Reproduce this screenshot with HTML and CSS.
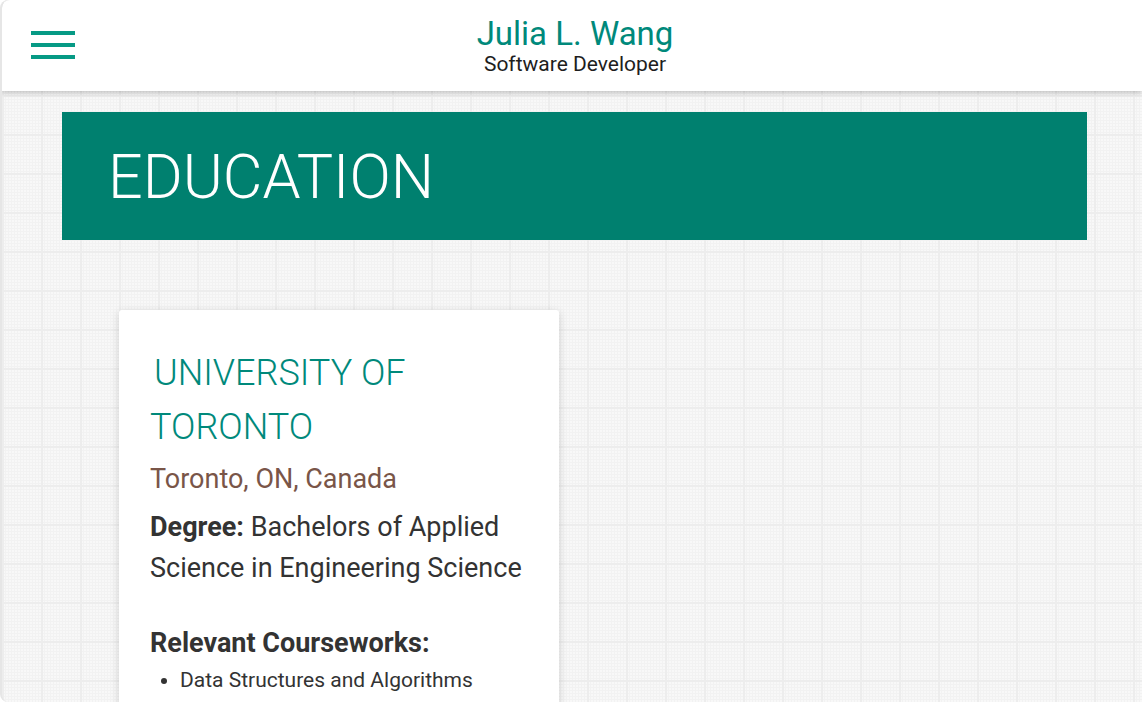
FILE: index.html
```html
<!DOCTYPE html>
<html lang="en">
<head>
<meta charset="utf-8">
<title>Julia L. Wang</title>
<link rel="stylesheet" href="styles.css">
</head>
<body>
<div class="page">
  <header class="topbar">
    <button class="menu" aria-label="Menu">
      <span class="bar"></span><span class="bar"></span><span class="bar"></span>
    </button>
    <div class="brand">
      <div class="name">Julia L. Wang</div>
      <div class="role">Software Developer</div>
    </div>
  </header>
  <main class="content">
    <section class="banner">
      <h1 class="banner-title">EDUCATION</h1>
    </section>
    <article class="card">
      <h2 class="school">UNIVERSITY OF TORONTO</h2>
      <p class="location">Toronto, ON, Canada</p>
      <p class="degree"><strong>Degree:</strong> Bachelors of Applied Science in Engineering Science</p>
      <h3 class="courses-title">Relevant Courseworks:</h3>
      <ul class="courses">
        <li>Data Structures and Algorithms</li>
        <li>Operating Systems</li>
        <li>Computer Networks</li>
      </ul>
    </article>
  </main>
</div>
</body>
</html>
```

FILE: styles.css
```css
* { box-sizing: border-box; }

html, body {
  margin: 0;
  padding: 0;
  height: 100%;
  overflow: hidden;
  background: #ffffff;
}

body {
  font-family: Roboto, "Liberation Sans", Arial, sans-serif;
}

.page {
  height: 702px;
  overflow: hidden;
  border-left: 2px solid #e6e6e6;
  border-radius: 8px 0 0 8px;
  background-color: #f8f8f8;
  background-image:
    linear-gradient(to right, #ededed 0, #ededed 2px, transparent 2px),
    linear-gradient(to bottom, #ededed 0, #ededed 2px, transparent 2px),
    repeating-linear-gradient(to right, #f2f2f2 0, #f2f2f2 1px, transparent 1px, transparent 3px),
    repeating-linear-gradient(to bottom, #f2f2f2 0, #f2f2f2 1px, transparent 1px, transparent 3px);
  background-size: 39px 39px, 39px 39px, auto, auto;
  background-position: 0 17px, 0 17px, 0 0, 0 0;
}

.topbar {
  position: relative;
  z-index: 2;
  height: 91px;
  background: #ffffff;
  border-top-left-radius: 8px;
  box-shadow: 0 2px 5px rgba(0, 0, 0, 0.22);
  display: flex;
  align-items: center;
  justify-content: center;
}

.menu {
  position: absolute;
  left: 29px;
  top: 31px;
  width: 44px;
  height: 28px;
  padding: 0;
  border: 0;
  background: transparent;
  display: flex;
  flex-direction: column;
  justify-content: space-between;
}

.bar {
  display: block;
  width: 44px;
  height: 4px;
  background: #069a85;
}

.brand {
  text-align: center;
  margin-left: 6px;
  margin-top: 1px;
}

.name {
  font-size: 33px;
  line-height: 36px;
  color: #00897b;
}

.role {
  font-size: 21px;
  line-height: 24px;
  color: #1e1e1e;
}

.content {
  padding: 21px 55px 0 60px;
}

.banner {
  height: 128px;
  background: #00806f;
  display: flex;
  align-items: center;
  padding-left: 46px;
}

.banner-title {
  margin: 2px 0 0;
  font-weight: 300;
  font-size: 61px;
  color: #ffffff;
}

.card {
  width: 440px;
  margin: 70px 0 0 57px;
  background: #ffffff;
  border-radius: 3px;
  box-shadow: 0 2px 8px rgba(0, 0, 0, 0.16);
  padding: 36px 30px 20px 31px;
}

.school {
  margin: 0;
  font-weight: 300;
  font-size: 36px;
  line-height: 54px;
  color: #00897b;
  width: 300px;
  text-indent: 4px;
}

.location {
  margin: 5px 0 0;
  font-size: 27px;
  line-height: 40px;
  color: #795548;
}

.degree {
  margin: 8px 0 0;
  font-size: 27px;
  line-height: 41px;
  color: #333333;
}

.degree strong { font-weight: 700; }

.courses-title {
  margin: 38px 0 0;
  font-size: 27px;
  line-height: 32px;
  font-weight: 700;
  color: #333333;
}

.courses {
  margin: 5px 0 0;
  padding-left: 30px;
  font-size: 21px;
  line-height: 33px;
  color: #333333;
}
```
